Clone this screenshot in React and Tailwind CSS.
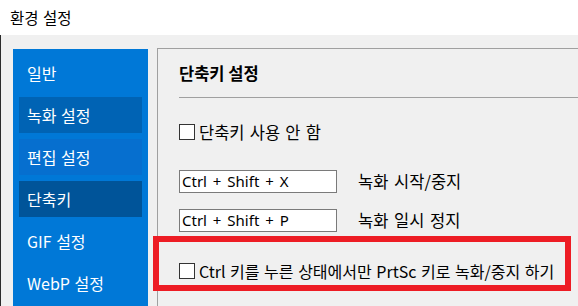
const MENU = [
  { label: "일반", bg: "" },
  { label: "녹화 설정", bg: "bg-[#0063b4]" },
  { label: "편집 설정", bg: "bg-[#066fcf]" },
  { label: "단축키", bg: "bg-[#005499]" },
  { label: "GIF 설정", bg: "" },
  { label: "WebP 설정", bg: "" },
];

function CheckBox() {
  return <span className="w-4 h-4 shrink-0 border border-[#333333] bg-white" />;
}

function HotkeyRow({ keys, label, className }) {
  return (
    <div className={`flex items-center ${className}`}>
      <div className="w-[158px] h-[23px] flex items-center border border-[#7a7a7a] bg-white pl-[2px] text-[15px] leading-none font-['Noto_Sans',sans-serif] [word-spacing:2px]">
        {keys}
      </div>
      <span className="ml-[21px] text-[16.5px] [word-spacing:2px]">{label}</span>
    </div>
  );
}

export default function App() {
  return (
    <div className="relative w-[578px] h-[306px] overflow-hidden bg-white text-black font-['Noto_Sans_CJK_KR','Noto_Sans',sans-serif]">
      {/* Title bar */}
      <div className="h-[35px] flex items-center pl-[10px] text-[15.5px] [word-spacing:1px]">환경 설정</div>

      <div className="flex h-[271px] border-l border-[#2b2b2b] bg-[#f0f0f0] pl-[12px] pt-[13px]">
        {/* Sidebar */}
        <div className="w-[135px] mt-px bg-[#0078d7] px-[6px] pt-[6px] flex flex-col gap-[6px]">
          {MENU.map((m) => (
            <div key={m.label} className={`h-[36px] shrink-0 flex items-center pl-[8px] text-[16px] text-white [word-spacing:1px] ${m.bg}`}>
              {m.label}
            </div>
          ))}
        </div>

        {/* Content panel */}
        <div className="flex-1 ml-[9px] border-l border-t border-[#a0a0a0] pl-[21px] pt-[12px]">
          <div className="h-[24px] flex items-center text-[16.5px] font-bold">단축키 설정</div>
          <div className="mt-[12px] h-px bg-[#a0a0a0]" />

          <div className="mt-[22px] h-[24px] flex items-center gap-[4px] text-[16.5px] [word-spacing:1.5px]">
            <CheckBox />
            <span>단축키 사용 안 함</span>
          </div>

          <HotkeyRow keys="Ctrl + Shift + X" label="녹화 시작/중지" className="mt-[25px]" />
          <HotkeyRow keys="Ctrl + Shift + P" label="녹화 일시 정지" className="mt-[14px]" />

          <div className="mt-[26px] h-[24px] flex items-center gap-[4px] text-[16px] [word-spacing:1px]">
            <CheckBox />
            <span>Ctrl 키를 누른 상태에서만 PrtSc 키로 녹화/중지 하기</span>
          </div>
        </div>
      </div>

      {/* Red highlight annotation */}
      <div className="absolute left-[153px] top-[236px] w-[418px] h-[55px] border-[6px] border-[#ed1c24] pointer-events-none" />
    </div>
  );
}
